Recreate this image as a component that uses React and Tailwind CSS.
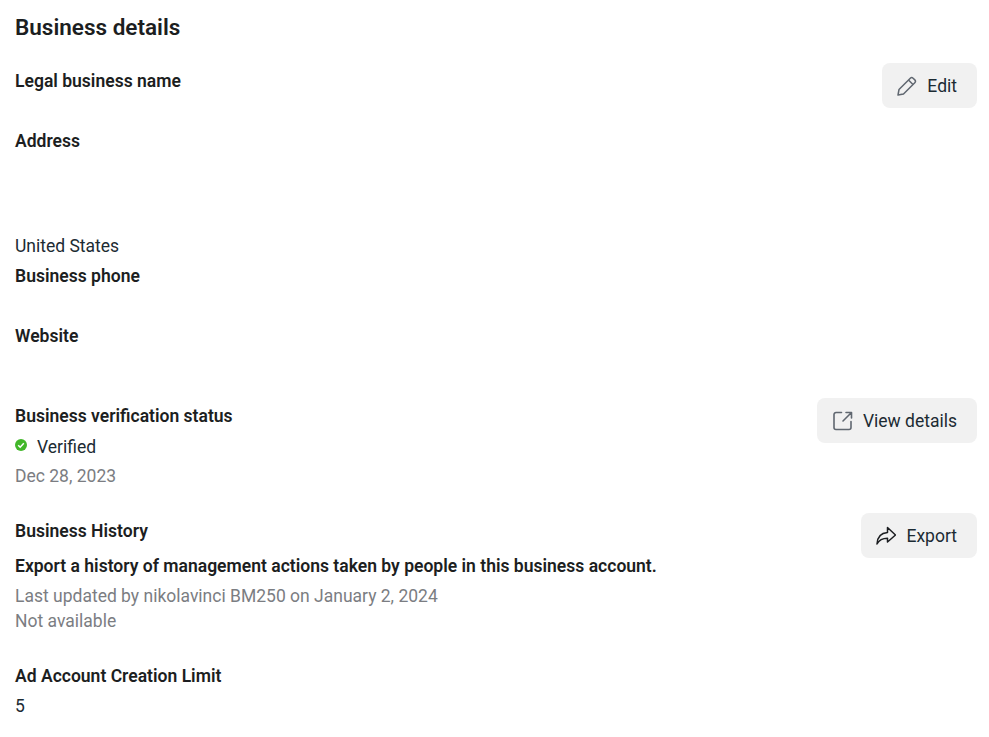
import React from "react";

const Label = ({ children, className = "" }) => (
  <div className={`h-[30px] leading-[30px] text-[17.55px] font-semibold text-[#1c1e21] ${className}`}>{children}</div>
);
const Text = ({ children, className = "" }) => (
  <div className={`h-[30px] leading-[30px] text-[17.5px] text-[#1c2b33] ${className}`}>{children}</div>
);
const Btn = ({ icon, label, className = "" }) => (
  <button className={`h-[45px] rounded-lg bg-[#f1f1f1] flex items-center gap-[10px] pr-[20px] text-[17.5px] text-[#1c2b33] shrink-0 ${className}`}>
    {icon}
    <span className="leading-[30px] pt-[1px]">{label}</span>
  </button>
);

const Pencil = () => (
  <svg width="20" height="20" viewBox="0 0 20 20" fill="none" stroke="#606770" strokeWidth="1.5" strokeLinejoin="round">
    <path d="M1 19l1-5.500L13.300 2.200a2 2 0 0 1 2.800 0l1.700 1.700a2 2 0 0 1 0 2.800L6.500 18z" />
    <path d="M11.500 4l4.500 4.500" />
  </svg>
);
const External = () => (
  <svg width="20" height="20" viewBox="0 0 20 20" fill="none" stroke="#606770" strokeWidth="1.6" strokeLinecap="round" strokeLinejoin="round">
    <path d="M8.500 1.500H3A2 2 0 0 0 1 3.500v13a2 2 0 0 0 2 2h13a2 2 0 0 0 2-2v-6" />
    <path d="M13 1.500h5.500V7M18 2l-8 8" />
  </svg>
);
const Share = () => (
  <svg width="20" height="20" viewBox="0 0 20 20" fill="none" stroke="#1c1e21" strokeWidth="1.500" strokeLinejoin="round">
    <path d="M11.500 1.500l8 7.500-8 7v-3.700c-4 0-8 1-10.500 5.700 .3-6 3.500-11 10.500-11.500z" />
  </svg>
);
const Check = () => (
  <svg width="12" height="12" viewBox="0 0 12 12" className="-mt-[2px]">
    <circle cx="6" cy="6" r="6" fill="#42b72a" />
    <path d="M3.200 6.200l2 2 3.600-4" fill="none" stroke="#fff" strokeWidth="1.500" />
  </svg>
);

export default function App() {
  return (
    <div className="w-[989px] h-[737px] bg-white pl-[15px] pr-[12px] pt-[12px] overflow-hidden font-['Roboto',sans-serif]">
      <h1 className="h-[30px] leading-[31px] text-[22.500px] font-semibold text-[#1c1e21]">Business details</h1>

      <div className="mt-[24px] flex justify-between items-start">
        <div>
          <Label>Legal business name</Label>
          <Label className="mt-[30px]">Address</Label>
          <Text className="mt-[75px]">United States</Text>
          <Label>Business phone</Label>
          <Label className="mt-[30px]">Website</Label>
        </div>
        <Btn icon={<Pencil />} label="Edit" className="-mt-[3px] pl-[15px]" />
      </div>

      <div className="mt-[50px] flex justify-between items-start">
        <div>
          <Label>Business verification status</Label>
          <div className="h-[30px] flex items-center gap-[10px] text-[17.5px] text-[#1c2b33]">
            <Check />
            <span className="leading-[30px] pt-[1px]">Verified</span>
          </div>
          <Text className="text-[#7b7d82]">Dec 28, 2023</Text>
        </div>
        <Btn icon={<External />} label="View details" className="-mt-[3px] pl-[16px]" />
      </div>

      <div className="mt-[25px] flex justify-between items-start">
        <div>
          <Label>Business History</Label>
          <Label className="mt-[5px]">Export a history of management actions taken by people in this business account.</Label>
          <div className="h-[25px] leading-[30px] text-[17.5px] text-[#7b7d82]">Last updated by nikolavinci BM250 on January 2, 2024</div>
          <div className="h-[30px] leading-[30px] text-[17.5px] text-[#7b7d82]">Not available</div>
        </div>
        <Btn icon={<Share />} label="Export" className="-mt-[3px] pl-[15px]" />
      </div>

      <div className="mt-[25px]">
        <Label>Ad Account Creation Limit</Label>
        <Text>5</Text>
      </div>
    </div>
  );
}
